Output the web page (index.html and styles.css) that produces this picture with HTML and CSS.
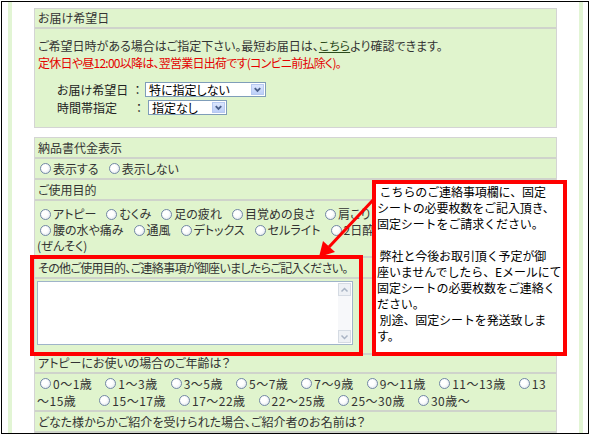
FILE: index.html
```html
<!DOCTYPE html>
<html lang="ja">
<head>
<meta charset="utf-8">
<title>お届け希望日</title>
<link rel="stylesheet" href="styles.css">
</head>
<body>
<div class="frame">
  <div class="gutter gutter-l"><div class="strip"></div></div>
  <div class="main">
    <section class="panel p1">
      <div class="hd">お届け希望日</div>
      <div class="bd">
        <p class="line">ご希望日時がある場合はご指定下さい。最短お届日は、<a class="link" href="#">こちら</a>より確認できます。</p>
        <p class="line red">定休日や昼12:00以降は、翌営業日出荷です(コンビニ前払除く)。</p>
        <div class="fld f1">
          <span class="lbl">お届け希望日</span><span class="colon c1">：</span>
          <div class="sel s1"><span class="txt">特に指定しない</span><span class="btn"><svg width="12" height="9" viewBox="0 0 12 9"><path d="M3 3 L6 6 L9 3" fill="none" stroke="#4a5f8a" stroke-width="2"/></svg></span></div>
        </div>
        <div class="fld f2">
          <span class="lbl">時間帯指定</span><span class="colon c2">：</span>
          <div class="sel s2"><span class="txt">指定なし</span><span class="btn"><svg width="12" height="9" viewBox="0 0 12 9"><path d="M3 3 L6 6 L9 3" fill="none" stroke="#4a5f8a" stroke-width="2"/></svg></span></div>
        </div>
      </div>
    </section>

    <section class="panel p2">
      <div class="hd">納品書代金表示</div>
      <div class="row">
        <span class="opt"><i class="rb"></i>表示する</span><span class="opt"><i class="rb"></i>表示しない</span>
      </div>
      <div class="hd">ご使用目的</div>
      <div class="opts">
        <div class="ln"><span class="opt"><i class="rb"></i>アトピー</span><span class="opt"><i class="rb"></i>むくみ</span><span class="opt"><i class="rb"></i>足の疲れ</span><span class="opt"><i class="rb"></i>目覚めの良さ</span><span class="opt"><i class="rb"></i>肩こり</span></div>
        <div class="ln"><span class="opt"><i class="rb"></i>腰の水や痛み</span><span class="opt"><i class="rb"></i>通風</span><span class="opt"><i class="rb"></i>デトックス</span><span class="opt"><i class="rb"></i>セルライト</span><span class="opt"><i class="rb"></i>2日酔</span></div>
        <div class="ln">(ぜんそく)</div>
      </div>
      <div class="hd h3">その他ご使用目的、ご連絡事項が御座いましたらご記入ください。</div>
      <div class="tarow">
        <div class="ta"><div class="sb"><span class="sbb"><svg width="9" height="6" viewBox="0 0 9 6"><path d="M1.5 4.5 L4.5 1.5 L7.5 4.5" fill="none" stroke="#a9b4c4" stroke-width="1.5"/></svg></span><span class="sbb"><svg width="9" height="6" viewBox="0 0 9 6"><path d="M1.5 1.5 L4.5 4.5 L7.5 1.5" fill="none" stroke="#a9b4c4" stroke-width="1.5"/></svg></span></div></div>
      </div>
      <div class="hd h4">アトピーにお使いの場合のご年齢は？</div>
      <div class="ages">
        <div class="ln"><span class="opt"><i class="rb"></i>0～1歳</span><span class="opt"><i class="rb"></i>1～3歳</span><span class="opt"><i class="rb"></i>3～5歳</span><span class="opt"><i class="rb"></i>5～7歳</span><span class="opt"><i class="rb"></i>7～9歳</span><span class="opt"><i class="rb"></i>9～11歳</span><span class="opt"><i class="rb"></i>11～13歳</span><span class="opt"><i class="rb"></i>13</span></div>
        <div class="ln"><span class="opt first">～15歳</span><span class="opt"><i class="rb"></i>15～17歳</span><span class="opt"><i class="rb"></i>17～22歳</span><span class="opt"><i class="rb"></i>22～25歳</span><span class="opt"><i class="rb"></i>25～30歳</span><span class="opt"><i class="rb"></i>30歳～</span></div>
      </div>
      <div class="hd">どなた様からかご紹介を受けられた場合、ご紹介者のお名前は？</div>
    </section>
  </div>
  <div class="gutter gutter-r"><div class="strip"></div></div>

  <div class="mark"></div>
  <svg class="arrow" width="80" height="75" viewBox="300 190 80 75">
    <line x1="374" y1="199" x2="329" y2="247" stroke="#f00" stroke-width="3"/>
    <polygon points="319,257 323,241 335,252" fill="#f00"/>
  </svg>
  <div class="callout">&nbsp;こちらのご連絡事項欄に、固定<br>シートの必要枚数をご記入頂き、<br>固定シートをご請求ください。<br><br>&nbsp;弊社と今後お取引頂く予定が御<br>座いませんでしたら、Eメールにて<br>固定シートの必要枚数をご連絡く<br>ださい。<br>&nbsp;別途、固定シートを発送致しま<br>す。</div>
</div>
</body>
</html>
```

FILE: styles.css
```css
html, body {
  margin: 0;
  padding: 0;
  background: #fff;
}
body {
  font-family: "Noto Sans CJK JP", "Noto Sans", sans-serif;
  font-size: 12px;
  color: #333;
  font-feature-settings: "palt";
}
p { margin: 0; }

.frame {
  position: relative;
  margin: 1px 0 0 1px;
  width: 588px;
  height: 433px;
  box-sizing: border-box;
  border: 1px solid #000;
  display: flex;
  overflow: hidden;
}
.gutter { display: flex; }
.gutter-l { width: 32px; }
.gutter-r { width: 31px; }
.gutter-l .strip { margin-left: 6px; }
.gutter-r .strip { margin-left: 22px; }
.strip {
  width: 4px;
  background: #e2f5d4;
}
.main {
  width: 523px;
  padding-top: 6px;
}

.panel {
  background: #e0f4cd;
  border: 1px solid #d4d4d4;
}
.p2 { margin-top: 9px; }

.hd {
  height: 19px;
  line-height: 19px;
  padding-left: 3px;
  border-bottom: 2px solid #cfd3cb;
  white-space: nowrap;
}
.p1 .hd { height: 18px; line-height: 18px; }
.h3 { letter-spacing: -0.7px; }

.bd {
  padding: 8px 0 11px 3px;
}
.line {
  line-height: 17px;
  white-space: nowrap;
}
.red { color: #e40000; letter-spacing: -0.75px; }
.link { color: #2c4a1c; text-decoration: underline; }

.fld {
  display: flex;
  align-items: center;
  height: 17px;
  padding-left: 19px;
  color: #222;
}
.f1 { margin-top: 10px; }
.f2 { margin-top: 1px; }
.lbl { width: 73px; }
.colon { text-align: center; }
.c1 { width: 15px; }
.c2 { width: 18px; }

.sel {
  display: flex;
  align-items: center;
  height: 15px;
  box-sizing: border-box;
  border: 1px solid #7f9db9;
  background: #fff;
  padding-left: 3px;
  color: #000;
}
.s1 { width: 121px; }
.s2 { width: 79px; }
.sel .txt {
  flex: 1;
  line-height: 13px;
  white-space: nowrap;
}
.sel .btn {
  width: 13px;
  height: 11px;
  margin-right: 1px;
  box-sizing: border-box;
  border: 1px solid #b7c9f1;
  background: linear-gradient(#dce6fd, #bccff8);
  display: flex;
  align-items: center;
  justify-content: center;
}

.row {
  height: 19px;
  line-height: 19px;
  padding-left: 5px;
  border-bottom: 2px solid #cfd3cb;
  white-space: nowrap;
}
.opt {
  display: inline-flex;
  align-items: center;
  margin-right: 10px;
}
.rb {
  display: inline-block;
  width: 11px;
  height: 11px;
  box-sizing: border-box;
  border: 1px solid #7388a6;
  border-radius: 50%;
  background: radial-gradient(circle at 40% 40%, #fff 35%, #d9e0e8 100%);
  margin-right: 2px;
}

.opts {
  padding: 5px 0 2px 5px;
  border-bottom: 2px solid #cfd3cb;
}
.opts .ln {
  line-height: 16px;
  height: 16px;
  white-space: nowrap;
}
.opts .ln:last-child { margin-left: -3px; }

.tarow {
  padding: 2px 0 8px 2px;
  border-bottom: 2px solid #cfd3cb;
}
.ta {
  width: 316px;
  height: 64px;
  box-sizing: border-box;
  border: 1px solid #9fb4c9;
  background: #fff;
  display: flex;
  justify-content: flex-end;
}
.sb {
  width: 13px;
  margin: 1px 1px 1px 0;
  display: flex;
  flex-direction: column;
  justify-content: space-between;
  background: #f7f8fa;
}
.sbb {
  height: 13px;
  box-sizing: border-box;
  border: 1px solid #d5dbe3;
  background: #eef1f5;
  display: flex;
  align-items: center;
  justify-content: center;
}

.h4 { height: 17px; line-height: 15px; }

.ages {
  padding: 1px 0 1px 5px;
  border-bottom: 2px solid #cfd3cb;
  font-feature-settings: normal;
  letter-spacing: 0.5px;
}
.ages .ln {
  height: 17px;
  line-height: 17px;
  white-space: nowrap;
}
.ages .opt { margin-right: 13px; }
.ages .opt.first { margin-right: 23px; }
.ages .ln:last-child { margin-left: -3px; }

.mark {
  position: absolute;
  left: 28px;
  top: 253px;
  width: 333px;
  height: 101px;
  box-sizing: border-box;
  border: 4px solid #f00;
}
.arrow {
  position: absolute;
  left: 298px;
  top: 188px;
}
.callout {
  position: absolute;
  left: 370px;
  top: 178px;
  width: 195px;
  height: 176px;
  box-sizing: border-box;
  border: 4px solid #f00;
  background: #fff;
  padding: 0 0 0 1px;
  font-size: 12px;
  letter-spacing: -0.1px;
  line-height: 16px;
  color: #000;
  font-feature-settings: normal;
  white-space: nowrap;
  overflow: hidden;
}
```
